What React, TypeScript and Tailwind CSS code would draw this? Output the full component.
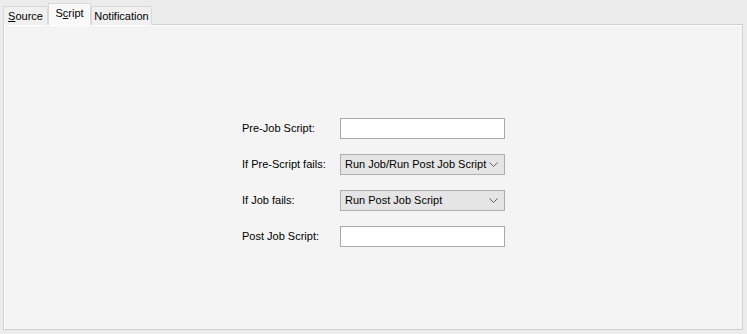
import React from 'react';

const font = { fontFamily: '"Liberation Sans", Arial, sans-serif' };

function Chevron() {
  return (
    <svg width="9" height="5" viewBox="0 0 9 5" className="text-[#606060]">
      <path d="M0.5 0.5 L4.5 4.5 L8.5 0.5" fill="none" stroke="currentColor" strokeWidth="1" />
    </svg>
  );
}

function Select({ value }: { value: string }) {
  return (
    <div className="flex h-[21px] w-[165px] items-center justify-between border border-[#adadad] bg-[#e5e5e5] pl-[4px] pr-[6px] text-[11px] text-black">
      <span>{value}</span>
      <Chevron />
    </div>
  );
}

function TextBox() {
  return <div className="h-[21px] w-[165px] border border-[#a9a9a9] bg-white" />;
}

export default function App() {
  const rows = [
    { label: 'Pre-Job Script:', field: <TextBox /> },
    { label: 'If Pre-Script fails:', field: <Select value="Run Job/Run Post Job Script" /> },
    { label: 'If Job fails:', field: <Select value="Run Post Job Script" /> },
    { label: 'Post Job Script:', field: <TextBox /> },
  ];

  return (
    <div className="h-[334px] w-[747px] overflow-hidden bg-[#ececec] pl-[3px] pr-[4px] pt-[3px]" style={font}>
      {/* Tabs */}
      <div className="flex h-[21px] items-end text-[11px] text-black">
        <div className="mb-[-1px] flex h-[19px] w-[45px] items-center justify-center border border-b-0 border-[#d9d9d9] bg-[#f0f0f0]">
          <span><u>S</u>ource</span>
        </div>
        <div className="relative z-10 mb-[-1px] flex h-[22px] w-[43px] items-center justify-center border border-b-0 border-[#d9d9d9] bg-[#f9f9f9] pb-[2px]">
          <span>S<u>c</u>ript</span>
        </div>
        <div className="mb-[-1px] flex h-[19px] w-[61px] items-center justify-center border border-b-0 border-[#d9d9d9] bg-[#f0f0f0]">
          <span>Notification</span>
        </div>
      </div>

      {/* Panel */}
      <div className="h-[306px] border border-[#d0d0d0] bg-[#f4f4f4]">
        <div className="flex h-full flex-col items-center border-t border-l border-white pt-[92px]">
          <div className="flex flex-col gap-[15px]">
            {rows.map((r) => (
              <div key={r.label} className="flex items-center">
                <div className="w-[98px] text-[11px] text-black">{r.label}</div>
                {r.field}
              </div>
            ))}
          </div>
        </div>
      </div>
    </div>
  );
}
